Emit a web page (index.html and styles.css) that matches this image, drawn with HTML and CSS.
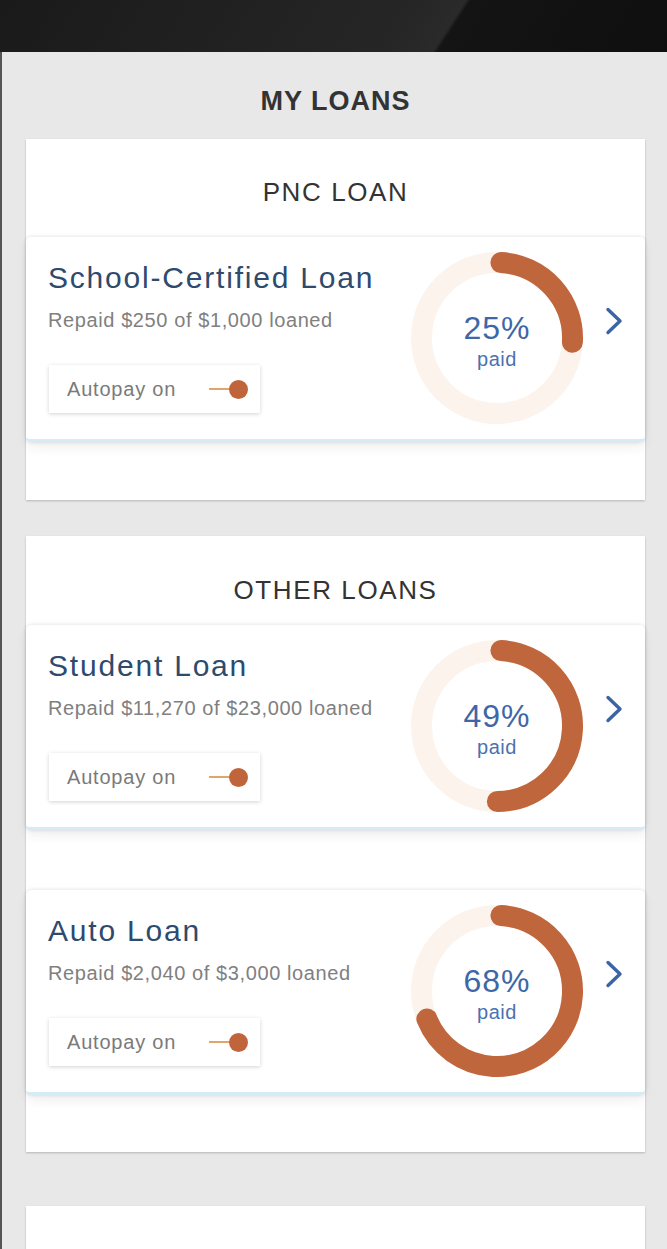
FILE: index.html
```html
<!DOCTYPE html>
<html lang="en">
<head>
<meta charset="utf-8">
<title>My Loans</title>
<link rel="stylesheet" href="styles.css">
</head>
<body>
<div class="statusbar"></div>
<main class="screen">
  <h1 class="page-title">MY LOANS</h1>

  <section class="group group-pnc">
    <h2 class="group-title">PNC LOAN</h2>
    <article class="loan">
      <div class="loan-info">
        <h3 class="loan-name">School-Certified Loan</h3>
        <p class="loan-sub">Repaid $250 of $1,000 loaned</p>
        <div class="autopay"><span>Autopay on</span><span class="toggle"><i class="toggle-line"></i><i class="toggle-knob"></i></span></div>
      </div>
      <div class="donut">
        <svg width="172" height="172" viewBox="0 0 172 172">
          <circle class="track" cx="86" cy="86" r="75.5"/>
          <circle class="bar" cx="86" cy="86" r="75.5" stroke-dasharray="118.6 474.4" transform="rotate(-87 86 86)"/>
        </svg>
        <div class="donut-label"><span class="pct">25%</span><span class="paid">paid</span></div>
      </div>
      <div class="chev"><svg width="18" height="28" viewBox="0 0 18 28"><path d="M3 2.5 L15 14 L3 25.5"/></svg></div>
    </article>
  </section>

  <section class="group group-other">
    <h2 class="group-title">OTHER LOANS</h2>
    <article class="loan">
      <div class="loan-info">
        <h3 class="loan-name">Student Loan</h3>
        <p class="loan-sub">Repaid $11,270 of $23,000 loaned</p>
        <div class="autopay"><span>Autopay on</span><span class="toggle"><i class="toggle-line"></i><i class="toggle-knob"></i></span></div>
      </div>
      <div class="donut">
        <svg width="172" height="172" viewBox="0 0 172 172">
          <circle class="track" cx="86" cy="86" r="75.5"/>
          <circle class="bar" cx="86" cy="86" r="75.5" stroke-dasharray="232.4 474.4" transform="rotate(-87 86 86)"/>
        </svg>
        <div class="donut-label"><span class="pct">49%</span><span class="paid">paid</span></div>
      </div>
      <div class="chev"><svg width="18" height="28" viewBox="0 0 18 28"><path d="M3 2.5 L15 14 L3 25.5"/></svg></div>
    </article>

    <article class="loan">
      <div class="loan-info">
        <h3 class="loan-name">Auto Loan</h3>
        <p class="loan-sub">Repaid $2,040 of $3,000 loaned</p>
        <div class="autopay"><span>Autopay on</span><span class="toggle"><i class="toggle-line"></i><i class="toggle-knob"></i></span></div>
      </div>
      <div class="donut">
        <svg width="172" height="172" viewBox="0 0 172 172">
          <circle class="track" cx="86" cy="86" r="75.5"/>
          <circle class="bar" cx="86" cy="86" r="75.5" stroke-dasharray="322.6 474.4" transform="rotate(-87 86 86)"/>
        </svg>
        <div class="donut-label"><span class="pct">68%</span><span class="paid">paid</span></div>
      </div>
      <div class="chev"><svg width="18" height="28" viewBox="0 0 18 28"><path d="M3 2.5 L15 14 L3 25.5"/></svg></div>
    </article>
  </section>

  <section class="group group-more"></section>
</main>
</body>
</html>
```

FILE: styles.css
```css
html, body {
  margin: 0;
  padding: 0;
}

body {
  height: 1249px;
  overflow: hidden;
  background: #e8e8e8;
  font-family: "Liberation Sans", Arial, sans-serif;
}

.statusbar {
  height: 52px;
  background: linear-gradient(123deg, #1a1a1a 0%, #262626 60%, #2a2a2a 66.5%, #141414 67.2%, #0f0f0f 100%);
}

.screen {
  border-left: 2px solid #555;
  min-height: 1197px;
  padding: 0 22px 0 24px;
  background: #e8e8e8;
}

.page-title {
  margin: 0;
  padding: 34px 0 23px;
  text-align: center;
  font-size: 27px;
  line-height: 30px;
  font-weight: 700;
  letter-spacing: 1px;
  color: #333;
}

.group {
  background: #fff;
  box-shadow: 0 1px 2px rgba(0, 0, 0, 0.22);
}

.group-title {
  margin: 0;
  text-align: center;
  font-size: 26px;
  line-height: 30px;
  font-weight: 400;
  letter-spacing: 1.6px;
  color: #333;
}

.group-pnc {
  padding: 38px 0 58px;
}

.group-pnc .group-title {
  margin-bottom: 30px;
}

.group-other {
  margin-top: 36px;
  padding: 39px 0 57px;
}

.group-other .group-title {
  margin-bottom: 20px;
}

.group-other .loan + .loan {
  margin-top: 60px;
}

.group-more {
  margin-top: 54px;
  height: 80px;
}

.loan {
  display: flex;
  align-items: center;
  background: #fff;
  border-radius: 5px;
  border-bottom: 3px solid #d6ebf8;
  box-shadow: 0 0 4px rgba(0, 0, 0, 0.13), 0 6px 12px rgba(0, 0, 0, 0.06);
}

.loan-info {
  flex: 1;
  align-self: stretch;
  padding: 23px 0 26px 22px;
  min-width: 0;
}

.loan-name {
  margin: 0 0 12px;
  font-size: 30px;
  line-height: 36px;
  font-weight: 400;
  letter-spacing: 1.8px;
  color: #2e4a6d;
  white-space: nowrap;
}

.loan-sub {
  margin: 0 0 33px;
  font-size: 20px;
  line-height: 24px;
  letter-spacing: 0.6px;
  color: #808080;
  white-space: nowrap;
}

.autopay {
  box-sizing: border-box;
  width: 211px;
  height: 48px;
  margin-left: 1px;
  padding: 0 12px 0 18px;
  display: flex;
  align-items: center;
  justify-content: space-between;
  background: #fff;
  box-shadow: 0 1px 4px rgba(0, 0, 0, 0.18);
  font-size: 20px;
  letter-spacing: 0.8px;
  color: #7a7a7a;
}

.toggle {
  display: flex;
  align-items: center;
}

.toggle-line {
  display: block;
  width: 22px;
  height: 2px;
  background: #e3a468;
}

.toggle-knob {
  display: block;
  width: 19px;
  height: 19px;
  margin-left: -2px;
  border-radius: 50%;
  background: #c0653b;
}

.donut {
  display: grid;
  width: 172px;
  height: 172px;
  flex: none;
}

.donut > * {
  grid-area: 1 / 1;
}

.donut svg {
  display: block;
}

.track {
  fill: none;
  stroke: #fcf3ed;
  stroke-width: 21;
}

.bar {
  fill: none;
  stroke: #c0663c;
  stroke-width: 21;
  stroke-linecap: round;
}

.donut-label {
  align-self: center;
  justify-self: center;
  display: flex;
  flex-direction: column;
  align-items: center;
  padding-top: 6px;
  color: #3e67a7;
}

.pct {
  font-size: 32px;
  line-height: 32px;
  letter-spacing: 1px;
}

.paid {
  margin-top: 4px;
  font-size: 20px;
  line-height: 22px;
  letter-spacing: 0.5px;
  color: #4a72b0;
}

.chev {
  flex: none;
  width: 62px;
  display: flex;
  justify-content: center;
  margin-bottom: 34px;
}

.chev svg {
  display: block;
}

.chev path {
  fill: none;
  stroke: #3c64a4;
  stroke-width: 3.4;
  stroke-linecap: round;
  stroke-linejoin: round;
}
```
